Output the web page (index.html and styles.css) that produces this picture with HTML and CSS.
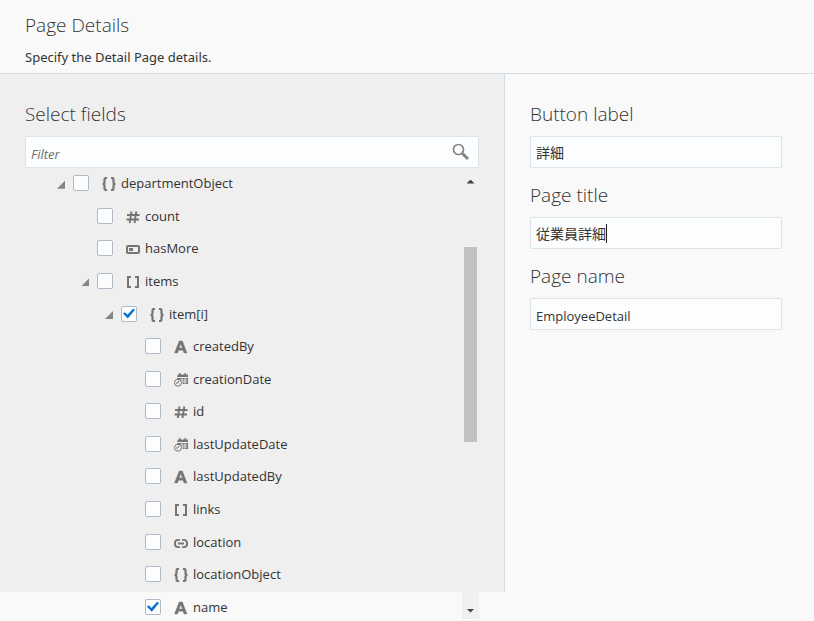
FILE: index.html
```html
<!DOCTYPE html>
<html lang="ja">
<head>
<meta charset="utf-8">
<title>Page Details</title>
<link rel="stylesheet" href="styles.css">
</head>
<body>
<svg class="sprite" aria-hidden="true">
  <symbol id="object" viewBox="0 0 14 14"><path d="M5 1H4Q2.500 1 2.500 2.500V5Q2.500 7 .5 7Q2.500 7 2.500 9V11.500Q2.500 13 4 13H5M9 1h1q1.500 0 1.500 1.500V5q0 2 2 2q-2 0-2 2v2.500Q11.500 13 10 13H9" fill="none" stroke="currentColor" stroke-width="2.200"/></symbol>
  <symbol id="array" viewBox="0 0 14 14"><path d="M5 2H2V12H5M9 2h3v10H9" fill="none" stroke="currentColor" stroke-width="2"/></symbol>
  <symbol id="number" viewBox="0 0 14 14"><path d="M1 5h12.500M.5 9.500H13M5.500 1.500L3.700 13M10.300 1.500L8.500 13" fill="none" stroke="currentColor" stroke-width="1.900"/></symbol>
  <symbol id="boolean" viewBox="0 0 14 14"><rect x="1" y="4" width="12" height="7" rx="1" fill="none" stroke="currentColor" stroke-width="2"/><path d="M3 6h4v3H3z" fill="currentColor"/></symbol>
  <symbol id="string" viewBox="0 0 14 14"><path d="M.5 13L5.200 1h3.200L13 13h-3L9 10.200H4.500L3.500 13zM5.200 8h3.100L6.800 3.700z" fill="currentColor" stroke="currentColor" stroke-width=".4"/></symbol>
  <symbol id="link" viewBox="0 0 14 14"><path d="M6 3.900H4Q.9 3.900 .9 7.500T4 11.100H6M8 3.900h2q3.100 0 3.100 3.600T10 11.100H8M4 7.500h6" fill="none" stroke="currentColor" stroke-width="1.900"/></symbol>
  <symbol id="date" viewBox="0 0 14 14"><path d="M4 1.500h1V0h1.500v1.500h4V0H12v1.500h2V4H3zM3 5h11v6H8.500V9.500L7 7H3z" fill="currentColor"/><path d="M5.500 7h7.500M8 9h5M8 5v6M11 5v6" stroke="#efefef" stroke-width=".8"/><circle cx="4" cy="9.700" r="3.500" fill="#efefef" stroke="currentColor"/><path d="M5 7.500L4 10H2" fill="none" stroke="currentColor"/></symbol>
</svg>
<div class="app">
  <header class="header">
    <h1>Page Details</h1>
    <p>Specify the Detail Page details.</p>
  </header>
  <main class="content">
    <section class="fields">
      <h2><label for="filter">Select fields</label></h2>
      <div class="search">
        <input id="filter" class="textbox" type="text" placeholder="Filter">
        <button type="button" class="search-button" aria-label="Search"><svg viewBox="0 0 18 18"><circle cx="6.500" cy="6.500" r="5" fill="none" stroke="currentColor" stroke-width="1.700"/><path d="M10.500 10.500L16 16" stroke="currentColor" stroke-width="3"/></svg></button>
      </div>
      <div class="viewport">
        <ul class="tree">
          <li class="row"><button type="button" class="toggle" aria-label="Collapse departmentObject"></button><input type="checkbox" id="f0"><label for="f0"><svg><use href="#object"/></svg>departmentObject</label></li>
          <li class="row level-1"><input type="checkbox" id="f1"><label for="f1"><svg><use href="#number"/></svg>count</label></li>
          <li class="row level-1"><input type="checkbox" id="f2"><label for="f2"><svg><use href="#boolean"/></svg>hasMore</label></li>
          <li class="row level-1"><button type="button" class="toggle" aria-label="Collapse items"></button><input type="checkbox" id="f3"><label for="f3"><svg><use href="#array"/></svg>items</label></li>
          <li class="row level-2"><button type="button" class="toggle" aria-label="Collapse item[i]"></button><input type="checkbox" id="f4" checked><label for="f4"><svg><use href="#object"/></svg>item[i]</label></li>
          <li class="row level-3"><input type="checkbox" id="f5"><label for="f5"><svg><use href="#string"/></svg>createdBy</label></li>
          <li class="row level-3"><input type="checkbox" id="f6"><label for="f6"><svg><use href="#date"/></svg>creationDate</label></li>
          <li class="row level-3"><input type="checkbox" id="f7"><label for="f7"><svg><use href="#number"/></svg>id</label></li>
          <li class="row level-3"><input type="checkbox" id="f8"><label for="f8"><svg><use href="#date"/></svg>lastUpdateDate</label></li>
          <li class="row level-3"><input type="checkbox" id="f9"><label for="f9"><svg><use href="#string"/></svg>lastUpdatedBy</label></li>
          <li class="row level-3"><input type="checkbox" id="f10"><label for="f10"><svg><use href="#array"/></svg>links</label></li>
          <li class="row level-3"><input type="checkbox" id="f11"><label for="f11"><svg><use href="#link"/></svg>location</label></li>
          <li class="row level-3"><input type="checkbox" id="f12"><label for="f12"><svg><use href="#object"/></svg>locationObject</label></li>
          <li class="row level-3"><input type="checkbox" id="f13" checked><label for="f13"><svg><use href="#string"/></svg>name</label></li>
        </ul>
        <div class="scrollbar">
          <button type="button" class="arrow up" aria-label="Scroll up"></button>
          <div class="track"><div class="thumb"></div></div>
          <button type="button" class="arrow down" aria-label="Scroll down"></button>
        </div>
      </div>
    </section>
    <form class="details">
      <div class="field">
        <label for="button-label">Button label</label>
        <input id="button-label" class="textbox cjk" type="text" value="詳細">
      </div>
      <div class="field">
        <label for="page-title">Page title</label>
        <input id="page-title" class="textbox cjk" type="text" value="従業員詳細">
        <span class="caret"></span>
      </div>
      <div class="field">
        <label for="page-name">Page name</label>
        <input id="page-name" class="textbox" type="text" value="EmployeeDetail">
      </div>
    </form>
  </main>
</div>
</body>
</html>
```
FILE: styles.css
```css
* { box-sizing: border-box; }

body {
  margin: 0;
  background: #f9f9f9;
  color: #333;
  font: 13px/20px "Open Sans", "Noto Sans CJK JP", sans-serif;
}

h1, h2, p, ul { margin: 0; padding: 0; }

input, button { font: inherit; color: inherit; margin: 0; }

button { padding: 0; border: 0; background: none; }

.sprite { display: none; }

.app {
  display: flex;
  flex-direction: column;
  height: 100vh;
  padding-bottom: 29px;
}

.header {
  padding: 12px 25px 6px;
  border-bottom: 1px solid #d6dfe6;
}

h1, h2, .field label {
  display: block;
  font-size: 19px;
  font-weight: 300;
  line-height: 26px;
}

.header p {
  margin-top: 9px;
  font-family: "Noto Sans", sans-serif;
}

.content {
  flex: 1;
  min-height: 0;
  display: grid;
  grid-template-columns: 505fr 309fr;
  grid-template-rows: minmax(0, 1fr);
}

.fields {
  min-height: 0;
  padding: 27px 25px 0;
  background: #efefef;
  border-right: 1px solid #d6dfe6;
}

.search { position: relative; margin-top: 9px; }

.textbox {
  display: block;
  width: 100%;
  height: 32px;
  padding: 4px 5px 0;
  border: 1px solid #dfe4e7;
  border-radius: 1px;
  background: #fcfdfe;
  outline: none;
}

.cjk { padding-top: 0; font-size: 14px; }

.textbox::placeholder { color: #6b6b6b; font-style: italic; opacity: 1; }

.search-button {
  position: absolute;
  top: 7px;
  right: 9px;
  width: 18px;
  height: 18px;
  color: #858585;
}

.search-button svg { display: block; }

.viewport {
  display: flex;
  height: 451px;
  overflow: hidden;
}

.tree {
  flex: 1;
  display: grid;
  grid-auto-rows: 1fr;
  height: 456px;
  margin-top: -1px;
  list-style: none;
}

.row {
  display: flex;
  align-items: center;
  padding-left: 48px;
}

.level-1 { padding-left: 72px; }
.level-2 { padding-left: 96px; }
.level-3 { padding-left: 120px; }

.toggle {
  width: 8px;
  height: 8px;
  margin: 3px 8px 0 -16px;
  background: #858585;
  clip-path: polygon(100% 0, 100% 100%, 0 100%);
}

.row input {
  appearance: none;
  width: 16px;
  height: 16px;
  border: 1px solid #aebbc6;
  border-radius: 2px;
  background: #fcfdfe;
}

.row input:checked::before {
  content: "";
  display: block;
  width: 12px;
  height: 10px;
  margin: 2px 1px;
  background: #0572ce;
  clip-path: polygon(0 50%, 15% 36%, 37% 62%, 85% 0, 100% 12%, 40% 100%);
}

.row label {
  display: flex;
  align-items: center;
  gap: 5px;
  margin-left: 13px;
}

.row svg {
  width: 14px;
  height: 14px;
  margin-top: 2px;
  color: #757575;
}

.scrollbar {
  display: flex;
  flex-direction: column;
  width: 17px;
  background: #f0f0f0;
}

.arrow { height: 19px; }

.arrow::before {
  content: "";
  display: block;
  width: 8px;
  height: 4px;
  margin: 2px auto 0;
  background: #444;
}

.up::before { clip-path: polygon(50% 0, 100% 100%, 0 100%); margin-top: 8px; }
.down::before { clip-path: polygon(0 0, 100% 0, 50% 100%); }

.track { flex: 1; padding: 60px 2px 0; }

.thumb { height: 195px; background: #c1c1c1; }

.details {
  display: flex;
  flex-direction: column;
  gap: 14px;
  padding: 27px 32px 0 25px;
}

.field { position: relative; }

.field label { margin-bottom: 9px; }

.caret {
  position: absolute;
  bottom: 6px;
  left: 76px;
  width: 1px;
  height: 19px;
  background: #222;
}
```
